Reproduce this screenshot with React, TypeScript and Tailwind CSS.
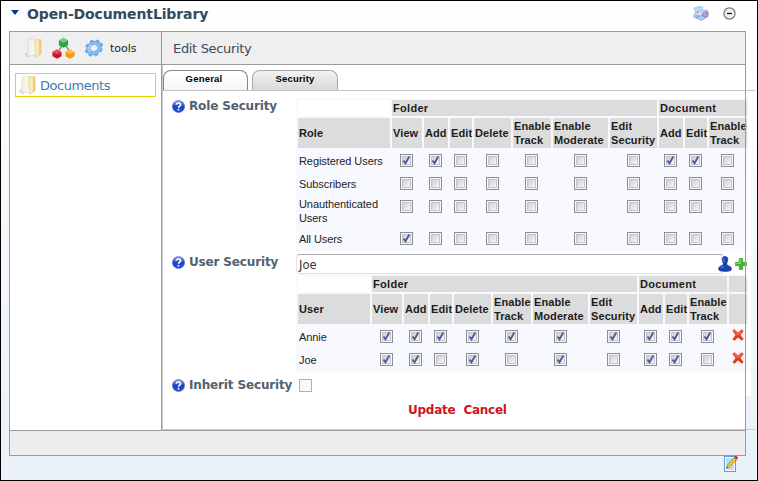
import React from 'react';

const ui = "font-['DejaVu_Sans','Verdana',sans-serif]";
const arial = "font-['Liberation_Sans','Arial',sans-serif]";

function FolderIcon() {
  return (
    <svg className="block h-5 w-[18px] shrink-0" viewBox="0 0 18 20">
      <defs>
        <linearGradient id="folderFront" x1="0" x2="1" y1="0" y2="0">
          <stop offset="0" stopColor="#efeae0" />
          <stop offset="1" stopColor="#fdfbf4" />
        </linearGradient>
        <linearGradient id="folderBack" x1="0" x2="1" y1="0" y2="0">
          <stop offset="0" stopColor="#fff0c8" />
          <stop offset="1" stopColor="#ecc671" />
        </linearGradient>
      </defs>
      <path d="M0 16l4-2 1 5-3-.5z" fill="#a9a9a9" opacity=".55" />
      <path d="M9 .800l7.500.700v14.500l-5 3z" fill="url(#folderBack)" />
      <path d="M3.500 1.500L9.500.800l1 16.500-8.500.700z" fill="url(#folderFront)" stroke="#d8cfba" strokeWidth=".5" />
      <path d="M9.800 3.800L14 1.500l.300 15.500-3.800 2.200z" fill="#fdebbd" stroke="#e2c276" strokeWidth=".5" />
    </svg>
  );
}

function RolesIcon() {
  return (
    <svg className="block h-[22px] w-6 shrink-0" viewBox="0 0 24 22">
      <path d="M11 7L5.500 16M12.500 7L19 16" stroke="#666" strokeWidth="1.100" />
      <path d="M11.500.800l4.600 2.600v4.800l-4.600 2.600-4.600-2.600V3.400z" fill="#2aa544" />
      <path d="M11.500.800l4.600 2.600-4.600 2.300-4.600-2.300z" fill="#72d083" />
      <path d="M5 12.500l4.500 2.400v4.400L5 21.700.500 19.300v-4.400z" fill="#cf1522" />
      <path d="M5 12.500l4.500 2.400L5 17.200.500 14.900z" fill="#ef4a50" />
      <path d="M18 12.500l4.500 2.400v4.400L18 21.700l-4.500-2.400v-4.400z" fill="#f59a08" />
      <path d="M18 12.500l4.500 2.400-4.500 2.300-4.500-2.300z" fill="#ffbf4a" />
    </svg>
  );
}

function GearIcon() {
  return (
    <svg className="block h-5 w-5 shrink-0" viewBox="0 0 20 20">
      <g transform="rotate(-35 10 10) translate(0 1.500) scale(1 .85)">
        <circle cx="10" cy="10" r="8" fill="none" stroke="#6ba9ea" strokeWidth="3.200" strokeDasharray="3.400 2.880" />
        <circle cx="10" cy="10" r="5.900" fill="none" stroke="#4f94de" strokeWidth="4.400" />
        <circle cx="10" cy="10" r="5.900" fill="none" stroke="#86bcf3" strokeWidth="3.200" />
        <path d="M4.800 11A5.500 5.500 0 0110 4.800" fill="none" stroke="#b6dafb" strokeWidth="1.300" />
      </g>
    </svg>
  );
}

function HelpIcon() {
  return (
    <svg className="block h-[13px] w-[13px] shrink-0" viewBox="0 0 13 13">
      <defs>
        <linearGradient id="helpFill" x1="0" x2="0" y1="0" y2="1">
          <stop offset="0" stopColor="#8faaf0" />
          <stop offset=".5" stopColor="#1d44c0" />
          <stop offset="1" stopColor="#2050e0" />
        </linearGradient>
      </defs>
      <circle cx="6.500" cy="6.500" r="6.100" fill="url(#helpFill)" stroke="#3c5fc0" strokeWidth=".5" />
      <path d="M4.300 4.800C4.500 2.300 8.900 2.500 8.600 4.900 8.400 6.300 6.600 6.200 6.500 7.900" fill="none" stroke="#fff" strokeWidth="1.600" />
      <rect x="5.600" y="8.900" width="1.700" height="1.600" fill="#fff" />
    </svg>
  );
}

function PrinterIcon() {
  return (
    <svg className="block h-[15px] w-4" viewBox="0 0 16 15">
      <path d="M1 2l6-1.500 3 1L8 7 3 8z" fill="#b7dcfa" stroke="#7fb3e6" strokeWidth=".6" />
      <path d="M.500 8l5-3 9-1.500L16 7l-.5 4-7 3.500-8-3z" fill="#b5b0e0" />
      <path d="M1 8l5-2.500L14 5l-6 4.500z" fill="#dedcf6" />
      <circle cx="12" cy="8.500" r="3" fill="#958fca" />
      <path d="M10.500 7.500l3 2" stroke="#dddaf5" />
      <path d="M3 11.500l6-2 3 2.500-4 2.500z" fill="#a4d5fb" stroke="#709cd8" strokeWidth=".6" />
      <path d="M4 6.500l1.500-.5" stroke="#4fc04f" strokeWidth="1.500" />
    </svg>
  );
}

function MinimizeIcon() {
  return (
    <svg className="block h-[13px] w-[13px]" viewBox="0 0 13 13">
      <circle cx="6.500" cy="6.500" r="5.600" fill="#f0f0f0" stroke="#777" strokeWidth="1.200" />
      <path d="M4 6.500h5" stroke="#111" strokeWidth="1.200" />
    </svg>
  );
}

function PersonIcon() {
  return (
    <svg className="block h-4 w-[14px]" viewBox="0 0 14 16">
      <path d="M7 .500c2.300 0 3 1.500 2.800 3.300-.1 1.500-.8 2.500-1 3.500-.1 1.200.2 1.900 1.700 2.500 2 .700 2.900 1.500 2.900 3.300 0 1.500-1.400 2.300-6.400 2.300S.600 14.600.600 13.100c0-1.800.9-2.600 2.900-3.300 1.500-.6 1.800-1.300 1.700-2.500-.2-1-.9-2-1-3.500C4 2 4.700.500 7 .500z" fill="#1b43b4" stroke="#112f86" strokeWidth=".6" />
      <path d="M6 2c-.8 1.500-.2 3 .5 4M3 11.800l3-1.300" stroke="#5d8aec" fill="none" />
    </svg>
  );
}

function PlusIcon() {
  return (
    <svg className="block h-3 w-3" viewBox="0 0 12 12">
      <path d="M4.300.500h3.400v3.800h3.800v3.400H7.700v3.800H4.300V7.700H.500V4.300h3.800z" fill="#41b62c" stroke="#38962a" strokeWidth=".6" />
      <path d="M5.300 1.500v4H1.500" stroke="#8be078" fill="none" />
    </svg>
  );
}

function DeleteIcon() {
  return (
    <svg className="block h-3 w-3" viewBox="0 0 12 12">
      <path d="M.300 1.800L2.500.300 6 3.500 9.500.300 11.700 2 8.500 6l3.200 3.900-1.900 1.800L6 8.600l-3.300 3.100-2.400-1.500L3.500 6z" fill="#ee4423" />
      <path d="M2.300 1.800L6 5.300 9.500 2" stroke="#ff8a65" fill="none" />
      <path d="M2 10.500l4-3.800 4 4" stroke="#d42c12" fill="none" />
    </svg>
  );
}

function EditPageIcon() {
  return (
    <svg className="block h-4 w-[14px]" viewBox="0 0 14 16">
      <rect x=".5" y=".5" width="11" height="15" fill="#fff" stroke="#5c9fd8" />
      <rect x="2" y="2" width="8" height="12" fill="#b9defa" />
      <path d="M2.500 12l1-3L10 1.800l2.500 2L5.500 10.800z" fill="#f6cb1c" stroke="#a87900" strokeWidth=".7" />
      <path d="M2.300 12.300l.6-1.700 1 1z" fill="#333" />
      <path d="M10.500 1.200L12 .300l1.600 1-.6 1.900z" fill="#c9252d" stroke="#c9252d" strokeWidth=".7" />
    </svg>
  );
}

function Check({ on }: { on: boolean }) {
  return (
    <span className="block h-[13px] w-[13px] shrink-0 border border-[#8e8f8f] bg-[#f6f6f6] p-px">
      <span className="block h-[9px] w-[9px] border border-[#c3c6cc] bg-linear-to-br from-[#cbcfd5] to-[#f7f7f7]">
        {on && (
          <svg className="block h-[7px] w-[7px] overflow-visible" viewBox="0 0 7 7">
            <path d="M.500 3.500L2.500 6.300 6.300-.500" fill="none" stroke="#4a5f97" strokeWidth="1.900" />
          </svg>
        )}
      </span>
    </span>
  );
}

type Row = { name: string; checks: string; tall?: boolean };

const heads = ['View', 'Add', 'Edit', 'Delete', 'Enable Track', 'Enable Moderate', 'Edit Security', 'Add', 'Edit', 'Enable Track'];

const roles: Row[] = [
  { name: 'Registered Users', checks: '1100000110' },
  { name: 'Subscribers', checks: '0000000000' },
  { name: 'Unauthenticated Users', checks: '0000000000', tall: true },
  { name: 'All Users', checks: '1000000000' },
];

const users: Row[] = [
  { name: 'Annie', checks: '1111111111' },
  { name: 'Joe', checks: '1101010110' },
];

const headCell = 'flex items-center bg-[#dcdcdc] pl-px font-bold';

function SecurityTable({ label, rows, removable }: { label: string; rows: Row[]; removable?: boolean }) {
  const cols = removable
    ? 'grid-cols-[72px_30px_24px_22px_37px_38px_55px_47px_24px_22px_38px_18px]'
    : 'grid-cols-[92px_30px_24px_22px_37px_38px_55px_47px_24px_22px_38px]';
  return (
    <div className={`${arial} grid w-max ${cols} gap-[2px] bg-[#f8f8ff] p-[2px] pr-px text-[11px] leading-[14px] text-[#1c1c1c]`}>
      <div className="h-4 bg-white" />
      <div className={`${headCell} col-span-7 tracking-[0.3px]`}>Folder</div>
      <div className={`${headCell} col-span-3 tracking-[0.3px]`}>Document</div>
      {removable && <div className="bg-[#dcdcdc]" />}
      <div className={`${headCell} h-[30px] tracking-[0.1px]`}>{label}</div>
      {heads.map((h, i) => (
        <div key={i} className={`${headCell} tracking-[0.1px]`}>{h}</div>
      ))}
      {removable && <div className="bg-[#dcdcdc]" />}
      {rows.map((r) => (
        <React.Fragment key={r.name}>
          <div className={`flex items-center pl-px tracking-[-0.08px] ${r.tall ? 'h-[30px]' : 'h-[21px]'}`}>{r.name}</div>
          {r.checks.split('').map((c, i) => (
            <div key={i} className="flex justify-center pr-px pt-1">
              <Check on={c === '1'} />
            </div>
          ))}
          {removable && (
            <div className="flex justify-center pt-[3px]">
              <DeleteIcon />
            </div>
          )}
        </React.Fragment>
      ))}
    </div>
  );
}

function FieldLabel({ children }: { children: string }) {
  return (
    <div className={`${ui} flex h-4 w-[124px] shrink-0 items-center gap-1 whitespace-nowrap text-[12px] font-bold tracking-[-0.15px] text-[#516170]`}>
      <HelpIcon />
      <span>{children}</span>
    </div>
  );
}

export default function App() {
  return (
    <div className="flex h-[481px] w-[758px] flex-col overflow-hidden border border-black bg-linear-to-b from-white to-[#eaf1f8]">
      <header className="flex h-[30px] shrink-0 items-start pl-[10px]">
        <svg className="mt-[9px] block h-[5px] w-2" viewBox="0 0 8 5">
          <path d="M0 0h8L4 5z" fill="#0a32a0" />
        </svg>
        <h1 className={`${ui} ml-2 mt-[3px] whitespace-nowrap text-[14px] font-bold leading-5 tracking-[-0.12px] text-[#34495e]`}>Open-DocumentLibrary</h1>
        <div className="ml-auto mr-[21px] flex gap-[14px] pt-[5px]">
          <PrinterIcon />
          <div className="pt-px"><MinimizeIcon /></div>
        </div>
      </header>

      <main className="relative ml-2 h-[425px] w-[737px] shrink-0 border border-[#9c9c9c] bg-white">
        <div className="flex h-[33px] border-b border-[#9c9c9c] bg-[#efefef]">
          <div className="flex w-[152px] items-center border-r border-[#9c9c9c] pl-[15px]">
            <FolderIcon />
            <div className="ml-[9px]"><RolesIcon /></div>
            <div className="ml-2"><GearIcon /></div>
            <span className={`${ui} ml-[6px] pt-[3px] text-[11px] text-[#222]`}>tools</span>
          </div>
          <h2 className={`${ui} flex items-center whitespace-nowrap pl-[11px] pt-px text-[13px] tracking-[-0.33px] text-[#3f4a59]`}>Edit Security</h2>
        </div>

        <div className="flex h-[365px]">
          <aside className="w-[152px] shrink-0 border-r border-[#9c9c9c] pl-[5px] pt-2">
            <div className={`${ui} flex h-6 w-[141px] items-center border border-[#ecd400] pl-[3px] text-[13px] tracking-[-0.45px] text-[#3d7ab4]`}>
              <FolderIcon />
              <span className="ml-[3px] pt-px">Documents</span>
            </div>
          </aside>
          <section className="flex w-[593px] shrink-0 flex-col border-b border-l border-[#c9c9c9]">
            <nav className={`${arial} flex h-[26px] shrink-0 items-end gap-1 border-b border-[#c4c4c4] text-[9.500px] font-bold tracking-[0.2px] text-black`}>
              <div className="flex h-5 w-[85px] justify-center rounded-t-lg border border-b-0 border-[#858585] bg-linear-to-b from-white to-[#f6f6f6] pr-[3px] leading-4">General</div>
              <div className="flex h-5 w-[86px] justify-center rounded-t-lg border border-b-0 border-[#aaa] bg-linear-to-b from-[#f2f2f2] to-[#d9d9d9] leading-4">Security</div>
            </nav>
            <div className="h-[305px] w-[588px] shrink-0 bg-white">
              <div className="flex pl-[9px] pt-[7px]">
                <FieldLabel>Role Security</FieldLabel>
                <SecurityTable label="Role" rows={roles} />
              </div>
              <div className="flex pl-[9px] pt-[3px]">
                <FieldLabel>User Security</FieldLabel>
                <div>
                  <div className="flex h-5 w-[452px]">
                    <div className={`${ui} h-5 w-[428px] shrink-0 rounded-sm border border-[#e2e3ea] border-t-[#abadb3] bg-white pl-[2px] text-[11.500px] leading-[21px] text-[#333]`}>Joe</div>
                    <div className="-ml-[6px] pt-[2px]"><PersonIcon /></div>
                    <div className="ml-[3px] pt-1"><PlusIcon /></div>
                  </div>
                  <SecurityTable label="User" rows={users} removable />
                </div>
              </div>
              <div className="flex items-center pl-[9px] pt-[5px]">
                <FieldLabel>Inherit Security</FieldLabel>
                <span className="ml-[3px] block h-[13px] w-[13px] border border-[#b2b2b2] bg-[#f9f9f9]" />
              </div>
            </div>
            <div className={`${ui} flex gap-2 pl-[245px] pt-[6px] text-[12px] font-bold leading-4 tracking-[-0.25px] text-[#c9161d]`}>
              <span>Update</span>
              <span>Cancel</span>
            </div>
          </section>
        </div>

        <footer className="h-[25px] border-t border-[#9c9c9c] bg-[#eee]" />
        <div className="absolute -right-px top-0 h-full w-px bg-[#9c9c9c]" />
      </main>

      <div className="flex justify-end pr-[19px]">
        <EditPageIcon />
      </div>
    </div>
  );
}
